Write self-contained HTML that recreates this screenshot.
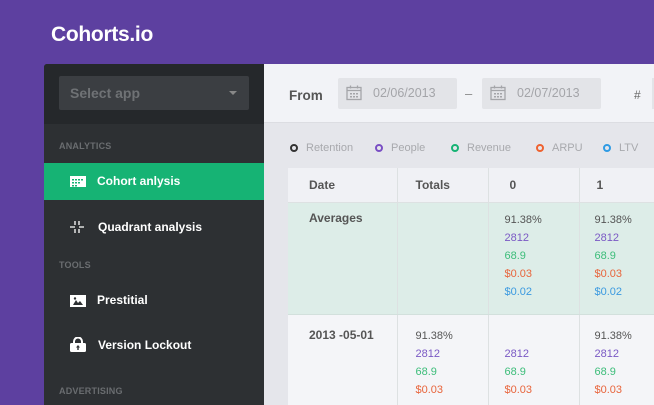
<!DOCTYPE html>
<html><head><style>
*{margin:0;padding:0;box-sizing:border-box}
html,body{width:654px;height:405px;overflow:hidden}
body{background:#5d40a0;font-family:"Liberation Sans",sans-serif;position:relative}
.logo{position:absolute;left:51px;top:23px;color:#fff;font-weight:bold;font-size:21px;letter-spacing:-0.3px}
.side{position:absolute;left:44px;top:64px;width:220px;height:341px;background:#2d3033;border-radius:3px 0 0 0;overflow:hidden}
.top{height:60px;background:#25282b;padding:12px 15px}
.sel{height:34px;background:#3b3e42;border-radius:2px;color:#6f7275;font-weight:bold;font-size:14px;line-height:34px;padding-left:11px;position:relative}
.sel:after{content:"";position:absolute;right:12px;top:15px;border:4px solid transparent;border-top:4px solid #888;border-bottom:0}
.sec{position:absolute;left:15px;color:#6a6d70;font-size:9px;font-weight:bold;letter-spacing:.2px}
.item{position:absolute;left:0;width:220px;height:37px;color:#fff;font-weight:bold;font-size:12px;line-height:37px;padding-left:53px}
.act{background:#16b374}
.ic{position:absolute;left:26px;top:13px}
.main{position:absolute;left:264px;top:64px;width:390px;height:341px;background:#e5e6eb;overflow:hidden}
.hdr{height:59px;background:#f2f3f7;border-bottom:1px solid #dcdde2;position:relative}
.from{position:absolute;left:25px;top:24px;font-weight:bold;font-size:13.5px;color:#555}
.date{position:absolute;top:14px;width:119px;height:31px;background:#e3e4e8;border-radius:2px;color:#a4a5a9;font-size:12.5px;line-height:31px;padding-left:35px}
.date svg{position:absolute;left:8px;top:7px}
.leg{position:absolute;top:78px;font-size:11px;color:#a8a9ad}
.leg i{display:inline-block;width:8px;height:8px;border:2px solid;border-radius:50%;margin-right:8px;vertical-align:-1px}
table{position:absolute;left:24px;top:104px;border-collapse:collapse;width:380px;font-size:11px}
td{border-left:1px solid #dde1e2;vertical-align:top}
.th td{height:32px;background:#f0f1f5;color:#555;font-weight:bold;font-size:12px;line-height:34px;border-bottom:1px solid #dde1e2}
.avg td{height:112px;background:#ddede8;border-bottom:1px solid #d2e0dc}
.r2 td{background:#f4f5f8;height:100px}
.v{line-height:18px;padding-top:8px}
.b{color:#555;font-weight:bold;font-size:12px;padding-top:8px}
.k{color:#555}.p{color:#7a59c4}.g{color:#3dbd7a}.o{color:#e8653c}.l{color:#3b9ae0}
</style></head><body>
<div class="logo">Cohorts.io</div>
<div class="side">
<div class="top"><div class="sel">Select app</div></div>
<div class="sec" style="top:77px">ANALYTICS</div>
<div class="item act" style="top:99px"><svg class="ic" width="16" height="11" viewBox="0 0 16 11"><rect width="16" height="11" fill="#fff"/><g fill="#16b374"><rect x="2" y="3" width="2" height="1.5"/><rect x="5" y="3" width="2" height="1.5"/><rect x="8" y="3" width="2" height="1.5"/><rect x="11" y="3" width="2" height="1.5"/><rect x="2" y="6" width="2" height="1.5"/><rect x="5" y="6" width="2" height="1.5"/><rect x="8" y="6" width="2" height="1.5"/><rect x="2" y="9" width="2" height="1.5"/><rect x="5" y="9" width="2" height="1.5"/></g></svg>Cohort anlysis</div>
<div class="item" style="top:145px;padding-left:54px"><svg class="ic" width="14" height="12" viewBox="0 0 14 12" style="top:12px"><g stroke="#fff" stroke-width="1.3"><path d="M5 0v4M9 0v4M5 8v4M9 8v4M0 6h5M9 6h5"/></g></svg>Quadrant analysis</div>
<div class="sec" style="top:196px">TOOLS</div>
<div class="item" style="top:218px"><svg class="ic" width="16" height="12" viewBox="0 0 16 12"><rect width="16" height="12" fill="#fff"/><path d="M3 10l3-5 2 3 2-2 3 4z" fill="#2d3033"/><circle cx="5" cy="3.5" r="1.2" fill="#2d3033"/></svg>Prestitial</div>
<div class="item" style="top:263px;padding-left:54px"><svg class="ic" width="16" height="15" viewBox="0 0 16 15" style="top:10px"><path d="M4 7V4.5a4 4 0 0 1 8 0V7" stroke="#fff" stroke-width="2" fill="none"/><rect y="6" width="16" height="9" rx="1.5" fill="#fff"/><path d="M8 8l-2 2.5h1.3V13h1.4v-2.5H10z" fill="#2d3033"/></svg>Version Lockout</div>
<div class="sec" style="top:322px">ADVERTISING</div>
</div>
<div class="main">
<div class="hdr">
<div class="from">From</div>
<div class="date" style="left:74px"><svg width="16" height="16" viewBox="0 0 16 16"><g fill="none" stroke="#a4a5a9" stroke-width="1.3"><rect x="1" y="2.5" width="14" height="12"/><path d="M1 5.5h14M4.5 0.5v3M11.5 0.5v3"/></g><g fill="#a4a5a9"><rect x="4" y="8" width="2" height="1.5"/><rect x="7" y="8" width="2" height="1.5"/><rect x="10" y="8" width="2" height="1.5"/><rect x="4" y="11" width="2" height="1.5"/><rect x="7" y="11" width="2" height="1.5"/><rect x="10" y="11" width="2" height="1.5"/></g></svg>02/06/2013</div>
<div style="position:absolute;left:201px;top:22px;color:#888;font-size:13px">–</div>
<div class="date" style="left:218px"><svg width="16" height="16" viewBox="0 0 16 16"><g fill="none" stroke="#a4a5a9" stroke-width="1.3"><rect x="1" y="2.5" width="14" height="12"/><path d="M1 5.5h14M4.5 0.5v3M11.5 0.5v3"/></g><g fill="#a4a5a9"><rect x="4" y="8" width="2" height="1.5"/><rect x="7" y="8" width="2" height="1.5"/><rect x="10" y="8" width="2" height="1.5"/><rect x="4" y="11" width="2" height="1.5"/><rect x="7" y="11" width="2" height="1.5"/><rect x="10" y="11" width="2" height="1.5"/></g></svg>02/07/2013</div>
<div style="position:absolute;left:370px;top:24px;color:#666;font-size:12px">#</div>
<div style="position:absolute;left:388px;top:14px;width:4px;height:31px;background:#e3e4e8"></div>
</div>
<div class="leg" style="left:26px"><i style="color:#333"></i>Retention</div>
<div class="leg" style="left:111px"><i style="color:#7a4fc4"></i>People</div>
<div class="leg" style="left:187px"><i style="color:#16b374"></i>Revenue</div>
<div class="leg" style="left:272px"><i style="color:#ee6230"></i>ARPU</div>
<div class="leg" style="left:339px"><i style="color:#2f9be4"></i>LTV</div>
<table>
<tr class="th"><td style="width:109px;padding-left:21px;border-left:0">Date</td><td style="width:91px;padding-left:18px">Totals</td><td style="width:91px;padding-left:21px">0</td><td style="padding-left:17px">1</td></tr>
<tr class="avg"><td class="b" style="padding-left:21px;border-left:0">Averages</td><td></td><td class="v" style="padding-left:16px"><div class="k">91.38%</div><div class="p">2812</div><div class="g">68.9</div><div class="o">$0.03</div><div class="l">$0.02</div></td><td class="v" style="padding-left:15px"><div class="k">91.38%</div><div class="p">2812</div><div class="g">68.9</div><div class="o">$0.03</div><div class="l">$0.02</div></td></tr>
<tr class="r2"><td class="b" style="padding-left:21px;border-left:0;padding-top:13px">2013 -05-01</td><td class="v" style="padding-left:18px;padding-top:12px"><div class="k">91.38%</div><div class="p">2812</div><div class="g">68.9</div><div class="o">$0.03</div></td><td class="v" style="padding-left:16px;padding-top:12px"><div>&nbsp;</div><div class="p">2812</div><div class="g">68.9</div><div class="o">$0.03</div></td><td class="v" style="padding-left:15px;padding-top:12px"><div class="k">91.38%</div><div class="p">2812</div><div class="g">68.9</div><div class="o">$0.03</div></td></tr>
</table>
</div>
</body></html>
